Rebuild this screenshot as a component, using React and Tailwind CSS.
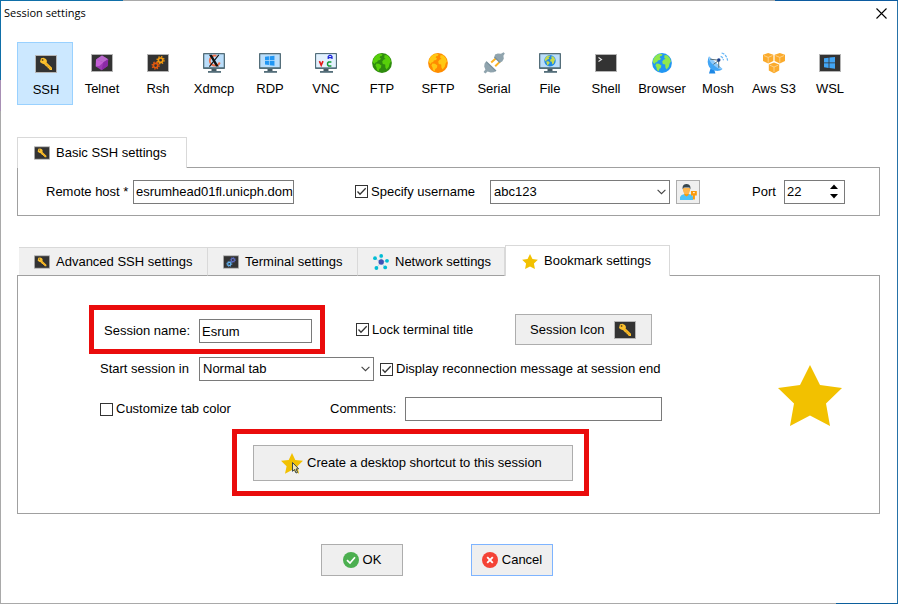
import React, { useState } from "react";

function Terminal({ children, className = "h-[18px] w-[22px]" }) {
  return (
    <svg viewBox="0 0 22 18" className={`shrink-0 ${className}`} aria-hidden="true">
      <rect x=".5" y=".5" width="21" height="17" fill="#333333" stroke="#b5b5b5" />
      {children}
    </svg>
  );
}

function KeyIcon({ className }) {
  return (
    <Terminal className={className}>
      <path
        d="M6 3.200 8.500 2.800 11 4 12 6 11.600 7.600 17 12.800V15H14.800L13.600 13.200H12.800L12.200 11.600H11.200L9.200 9.200 7 8.600 5 7Z"
        fill="#fbc02d"
      />
      <path d="M10.600 8.200 15.800 13.800" stroke="#ee9f12" strokeWidth=".9" />
      <circle cx="7.600" cy="5" r=".9" fill="#6b5520" />
    </Terminal>
  );
}

function GearsIcon({ a, b, className }) {
  return (
    <Terminal className={className}>
      <circle cx="13.600" cy="6.200" r="2.200" fill="none" stroke={a} strokeWidth="1.700" />
      <circle cx="13.600" cy="6.200" r="3.500" fill="none" stroke={a} strokeWidth="1.300" strokeDasharray="1.400 1.350" />
      <circle cx="8.600" cy="11.600" r="2.200" fill="none" stroke={b} strokeWidth="1.700" />
      <circle cx="8.600" cy="11.600" r="3.500" fill="none" stroke={b} strokeWidth="1.300" strokeDasharray="1.400 1.350" />
    </Terminal>
  );
}

function Monitor({ children }) {
  return (
    <svg viewBox="0 0 22 20" className="h-5 w-[22px]" aria-hidden="true">
      <path d="M8.500 15h5v3.200h-5z" fill="#455a64" />
      <path d="M5 18h13v1.800H5z" fill="#546e7a" />
      <rect width="22" height="16" rx=".8" fill="#546e7a" />
      <rect x="1.300" y="1.300" width="19.400" height="12.900" fill="#bbdefb" />
      {children}
    </svg>
  );
}

function Continents({ fill }) {
  return (
    <g fill={fill}>
      <path d="M2.200 4.600 4.800 1.800 8 .8 10.600 1.200 9.600 3 8.200 3.200 7.600 4.600 9 5.400 8 7 5.800 7.400 5.200 9 3.400 9.400 2.800 11 .9 9.600Q.9 6.600 2.200 4.600Z" />
      <path d="M4.400 10.600 7 10.800 9.400 12.600 8.800 15 7.200 16 6.800 18.400 5 17 4.400 14.200 3.400 12.600Z" />
      <path d="M12.600 2 15.600 2.600 18 5.400 18.900 8.400 17.600 10.400 16.800 13.800 14.600 16.400 13.400 14.600 13.200 11.600 10.800 11 10.200 8.600 11.800 6.600 13.600 6 12.200 4.800Z" />
    </g>
  );
}

function Globe({ sea, land }) {
  return (
    <svg viewBox="0 0 20 20" className="size-5" aria-hidden="true">
      <circle cx="10" cy="10" r="9.900" fill={sea} />
      <Continents fill={land} />
    </svg>
  );
}

function WinLogo({ fill }) {
  return (
    <path
      fill={fill}
      d="M0 1.300 4.600.7V5.400H0ZM5.400.6 11 0V5.400H5.400ZM0 6.200H4.600V10.900L0 10.300ZM5.400 6.200H11V11.800L5.400 11Z"
    />
  );
}

function TelnetIcon() {
  return (
    <Terminal>
      <path d="M11 1.600 17.200 5.200 16.600 12 10.600 16.200 4.800 12.600 5 5.600Z" fill="#9c3bb4" />
      <path d="M11 1.600 17.200 5.200 12.400 8.200 5 5.600Z" fill="#b868cc" />
      <path d="M12.400 8.200 17.200 5.200 16.600 12 10.600 16.200Z" fill="#8a2aa6" />
      <path d="M5 5.600 12.400 8.200 8.400 12 4.800 12.600Z" fill="#c45fd6" />
    </Terminal>
  );
}

function XdmcpIcon() {
  return (
    <Monitor>
      <path d="M13.500 2.800A5.200 5 0 1 0 16.800 9.500" fill="none" stroke="#f0704a" strokeWidth="1.900" />
      <path d="M6 1.800H8.800L15.800 13.600H13Z" fill="#111" />
      <path d="M15.800 1.800 6.400 13.600" stroke="#111" strokeWidth="1.100" />
    </Monitor>
  );
}

function VncIcon() {
  return (
    <Monitor>
      <rect x="1.300" y="1.300" width="19.400" height="12.900" fill="#e3f1fd" />
      <path d="M4.400 8.200 6.200 12.200 8 8.200" fill="none" stroke="#e31b1b" strokeWidth="1.600" />
      <path d="M13.200 6V3.600L14.400 2.400H15.800L17 3.600V6M13.400 4.600H16.800" fill="none" stroke="#1a23d8" strokeWidth="1.200" />
      <path d="M16.400 9H13.600L12.600 10V12L13.600 13H16.400" fill="none" stroke="#109a30" strokeWidth="1.500" />
    </Monitor>
  );
}

function SerialIcon() {
  return (
    <svg viewBox="0 0 22 22" className="size-[22px]" aria-hidden="true">
      <path d="M8.200 10.600 13.600 5.800M12.200 14.200 17 9.600" stroke="#fbb324" strokeWidth="2" />
      <path d="M11.400 5 12 2.600 14.800 1.400 18 1.800 20.600.2 21.800 1.400 20.400 3.800 20.800 6.800 19.200 9.600 17 10.600Z" fill="#90a4ae" />
      <path d="M3.200 9.600 13 19 10.800 20.200 7.600 20.600 4.600 19.600 2.400 21.600.6 20 2.400 17.600 1.200 14.600 1.600 11.400Z" fill="#90a4ae" />
      <path d="M3.200 9.600 13 19M11.400 5 17 10.600" fill="none" stroke="#78909c" strokeWidth="1.300" />
    </svg>
  );
}

function MoshIcon() {
  return (
    <svg viewBox="0 0 22 22" className="size-[22px]" aria-hidden="true">
      <path d="M3.600 16.200 2 21.600H8.400L7.200 17.400Z" fill="#1e88e5" />
      <path d="M2 4.400C-1 10 1.400 17.600 8.400 18.800 11.600 19.200 14 18.400 15.400 17Z" fill="#42a5f5" />
      <path d="M2 4.400 15.400 17C14 18.400 9 15.800 6 12.600 2.600 9.200 1 6 2 4.400Z" fill="#90caf9" />
      <path d="M3.200 7.200 11.600 8.200 11.800 15.800M11.800 8.400 6.400 12.400" fill="none" stroke="#546e7a" strokeWidth="1" />
      <circle cx="11.800" cy="8" r="1.700" fill="#1a3e8c" />
      <path d="M13.600 4.400Q16 5 16.400 8.200M14.600 1Q19.400 2.200 20.600 8.600" fill="none" stroke="#64b5f6" strokeWidth="1.200" strokeDasharray="3 1" />
    </svg>
  );
}

function Cube() {
  return (
    <>
      <path d="M5.200 0 10.400 1.800V8L5.200 10.600 0 8V1.800Z" fill="#fbab2c" />
      <path d="M1 2.600 5.200 4.400 9.400 2.600M5.200 4.400V9.600" fill="none" stroke="#fde0b0" strokeWidth=".7" />
    </>
  );
}

function AwsIcon() {
  return (
    <svg viewBox="0 0 22 21" className="h-[21px] w-[22px]" aria-hidden="true">
      <Cube />
      <g transform="translate(11.600 0)">
        <Cube />
      </g>
      <g transform="translate(5.800 9.600)">
        <Cube />
      </g>
    </svg>
  );
}

function Star({ className }) {
  return (
    <svg viewBox="0 0 64 61" className={`shrink-0 ${className}`} aria-hidden="true">
      <path d="M32 0 42 20 64 23 48 38.500 52 61 32 50.500 12 61 16 38.500 0 23 22 20Z" fill="#f2c100" />
    </svg>
  );
}

function NetworkIcon() {
  return (
    <svg viewBox="0 0 16 16" className="size-4 shrink-0" aria-hidden="true">
      <path d="M8 8 8.200 2M8 8 2 4.500M8 8 14 6.800M8 8 3.500 14M8 8 12 13.500" stroke="#9adbe8" strokeWidth=".8" />
      <circle cx="8.200" cy="8" r="2.700" fill="#3f51b5" />
      <g fill="#00bcd4">
        <circle cx="8.200" cy="1.900" r="1.900" />
        <circle cx="2" cy="4.200" r="1.900" />
        <circle cx="14" cy="6.800" r="1.900" />
        <circle cx="3.400" cy="14" r="1.900" />
        <circle cx="12.200" cy="13.400" r="1.900" />
      </g>
    </svg>
  );
}

function UserKeyIcon() {
  return (
    <svg viewBox="0 0 17 16" className="h-4 w-[17px] shrink-0" aria-hidden="true">
      <path d="M0 16V13Q1 10.400 4.500 10H8.500Q12.600 10.400 13 13V16Z" fill="#4fc3f7" />
      <path d="M4.400 9H8.600V11L6.500 12.600 4.400 11Z" fill="#ff9800" />
      <path d="M3 4H10V6.500Q9.500 10.200 6.500 10.300 3.500 10.200 3 6.500Z" fill="#ffb74d" />
      <path d="M2.600 5.400V3Q3.200.2 6.500.1 9.800.2 10.400 3V5.400L9.400 3.400H5L3.600 3.800Z" fill="#37474f" />
      <path d="M11 7H16.800V11.400H14.900V15.600H12.900V11.400H11Z" fill="#fb9a0b" />
      <path d="M13 8.700H14.800" stroke="#fff" strokeWidth="1" />
    </svg>
  );
}

const SESSIONS = [
  ["SSH", <KeyIcon />],
  ["Telnet", <TelnetIcon />],
  ["Rsh", <GearsIcon a="#f59a0c" b="#e2590f" />],
  ["Xdmcp", <XdmcpIcon />],
  [
    "RDP",
    <Monitor>
      <g transform="translate(6 2.700) scale(.86)">
        <WinLogo fill="#2196f3" />
      </g>
    </Monitor>,
  ],
  ["VNC", <VncIcon />],
  ["FTP", <Globe sea="#2e8b0e" land="#57cf0a" />],
  ["SFTP", <Globe sea="#ff8c00" land="#ffc814" />],
  ["Serial", <SerialIcon />],
  [
    "File",
    <Monitor>
      <g transform="translate(5.200 2) scale(.58)">
        <circle cx="10" cy="10" r="9.900" fill="#1e88e5" />
        <Continents fill="#c5d94c" />
      </g>
    </Monitor>,
  ],
  [
    "Shell",
    <Terminal>
      <path d="M3.500 3.500 6.500 5.500 3.500 7.500" fill="none" stroke="#e8e8e8" strokeWidth="1.100" />
    </Terminal>,
  ],
  ["Browser", <Globe sea="#2196f3" land="#8fe84c" />],
  ["Mosh", <MoshIcon />],
  ["Aws S3", <AwsIcon />],
  [
    "WSL",
    <Terminal>
      <g transform="translate(5 3)">
        <WinLogo fill="#42a5f5" />
      </g>
    </Terminal>,
  ],
];

function CheckBox({ id, children, defaultChecked }) {
  return (
    <div className="flex items-center gap-[3px]">
      <span className="grid size-[13px] shrink-0">
        <input
          id={id}
          type="checkbox"
          defaultChecked={defaultChecked}
          className="peer col-start-1 row-start-1 size-[13px] appearance-none border border-[#333333] bg-white"
        />
        <svg
          viewBox="0 0 13 13"
          className="pointer-events-none invisible col-start-1 row-start-1 size-[13px] peer-checked:visible"
          aria-hidden="true"
        >
          <path d="M2.500 6.500 5 9.200 10.700 3.300" fill="none" stroke="#333" strokeWidth="1.300" />
        </svg>
      </span>
      <label htmlFor={id}>{children}</label>
    </div>
  );
}

function Combo({ id, label, className, children }) {
  return (
    <span className={`grid shrink-0 ${className}`}>
      <select
        id={id}
        aria-label={label}
        className="col-start-1 row-start-1 h-6 w-full appearance-none border border-[#7a7a7a] bg-white pr-5 pl-[3px]"
      >
        {children}
      </select>
      <svg
        viewBox="0 0 9 6"
        className="pointer-events-none col-start-1 row-start-1 mr-1 h-[6px] w-[9px] self-center justify-self-end"
        aria-hidden="true"
      >
        <path d="M.6.8 4.500 4.700 8.400.8" fill="none" stroke="#444" strokeWidth="1.100" />
      </svg>
    </span>
  );
}

const FIELD = "h-6 border border-[#7a7a7a] bg-white pl-[2px]";
const BUTTON = "flex items-center border border-[#adadad] bg-[#efefef]";
const TAB =
  "flex h-[29px] items-center gap-[6px] border-t border-r border-b border-[#d9d9d9] border-b-[#a0a0a0] bg-[#f0f0f0] pl-[15px]";

export default function App() {
  const [port, setPort] = useState(22);
  return (
    <div className="flex min-h-screen flex-col font-['Liberation_Sans',Arial,sans-serif] text-[13px] leading-4 text-black">
      <div className="h-px bg-[linear-gradient(to_right,#0f6fa8_123px,#a9a9a9_123px,#a9a9a9_775px,#0c5ba0_775px)]" />
      <div className="flex flex-1">
        <div className="w-px bg-[linear-gradient(to_bottom,#0f6fa8_79px,#a78fb4_79px,#a78fb4_110px,#a9a9a9_110px)]" />
        <main className="min-w-0 flex-1 bg-white">
          <header className="flex h-6 items-center justify-between pr-[10px] pl-[3px]">
            <h1 className="font-['Open_Sans','Noto_Sans',sans-serif] text-[11px]">Session settings</h1>
            <button type="button" aria-label="Close">
              <svg viewBox="0 0 11 11" className="size-[11px]" aria-hidden="true">
                <path d="M.5.5 10.500 10.500M10.500.5.5 10.500" stroke="#000" strokeWidth="1.100" />
              </svg>
            </button>
          </header>

          <nav className="mt-[17px] flex pl-4" aria-label="Session type">
            {SESSIONS.map(([name, icon], i) => (
              <button
                key={name}
                type="button"
                className={
                  "flex h-[63px] w-14 shrink-0 flex-col items-center pt-[9px] pl-[2px] whitespace-nowrap " +
                  (i === 0 ? "border border-[#99d1ff] bg-[#cce8ff]" : "")
                }
              >
                <span className="flex h-6 items-center">{icon}</span>
                <span className="mt-[6px]">{name}</span>
              </button>
            ))}
          </nav>

          <section className="mt-8 mr-[17px] ml-4">
            <div className="relative -mb-px flex h-[31px] w-[170px] items-center gap-[6px] border-x border-t border-[#d9d9d9] bg-white pl-4">
              <KeyIcon className="h-[14px] w-4" />
              <h2>Basic SSH settings</h2>
            </div>
            <div className="flex h-[49px] items-center border border-[#a0a0a0] pl-7">
              <label htmlFor="host" className="w-[87px] shrink-0">
                Remote host *
              </label>
              <input id="host" defaultValue="esrumhead01fl.unicph.dom" className={FIELD + " w-[161px]"} />
              <div className="ml-[61px] w-[135px]">
                <CheckBox id="user-on" defaultChecked>
                  Specify username
                </CheckBox>
              </div>
              <Combo id="user" label="Username" className="w-[180px]">
                <option>abc123</option>
              </Combo>
              <button
                type="button"
                aria-label="Manage users"
                className={BUTTON + " ml-[6px] size-6 shrink-0 justify-center"}
              >
                <UserKeyIcon />
              </button>
              <label htmlFor="port" className="ml-[52px] w-8 shrink-0">
                Port
              </label>
              <div className="flex h-6 w-[61px] shrink-0 items-center border border-[#7a7a7a] pr-[6px] pl-[2px]">
                <input
                  id="port"
                  inputMode="numeric"
                  value={port}
                  onChange={(e) => setPort(Number(e.target.value) || 0)}
                  className="w-full min-w-0 flex-1"
                />
                <div className="flex flex-col gap-[5px]">
                  <button type="button" aria-label="Increase port" onClick={() => setPort(port + 1)}>
                    <svg viewBox="0 0 8 5" className="block h-[5px] w-2" aria-hidden="true">
                      <path d="M0 5 4 .5 8 5Z" />
                    </svg>
                  </button>
                  <button type="button" aria-label="Decrease port" onClick={() => setPort(port - 1)}>
                    <svg viewBox="0 0 8 5" className="block h-[5px] w-2" aria-hidden="true">
                      <path d="M0 0 4 4.500 8 0Z" />
                    </svg>
                  </button>
                </div>
              </div>
            </div>
          </section>

          <section className="mt-[29px] mr-[17px] ml-4">
            <div className="relative -mb-px flex items-end pl-[2px]" role="tablist">
              <button type="button" role="tab" className={TAB + " w-[189px]"}>
                <KeyIcon className="h-[14px] w-4" />
                Advanced SSH settings
              </button>
              <button type="button" role="tab" className={TAB + " w-[150px]"}>
                <GearsIcon a="#5c6bc0" b="#64b5f6" className="h-[14px] w-4" />
                Terminal settings
              </button>
              <button type="button" role="tab" className={TAB + " w-[147px]"}>
                <NetworkIcon />
                Network settings
              </button>
              <button
                type="button"
                role="tab"
                aria-selected="true"
                className="flex h-[31px] w-[165px] items-center gap-[6px] border-x border-t border-[#d9d9d9] bg-white pl-4"
              >
                <Star className="h-[15px] w-4" />
                Bookmark settings
              </button>
            </div>

            <div className="flex items-center justify-between border border-[#a0a0a0] pt-[29px] pr-[37px] pb-[17px] pl-[71px]">
              <form className="flex flex-col items-start">
                <div className="flex items-center">
                  <div className="flex w-[236px] items-center border-5 border-[#ea0c0c] pt-[9px] pr-2 pb-[6px] pl-[10px]">
                    <label htmlFor="session" className="w-[95px] shrink-0">
                      Session name:
                    </label>
                    <input id="session" defaultValue="Esrum" className={FIELD + " w-[113px] min-w-0"} />
                  </div>
                  <div className="ml-[31px] w-[159px]">
                    <CheckBox id="lock" defaultChecked>
                      Lock terminal title
                    </CheckBox>
                  </div>
                  <button type="button" className={BUTTON + " h-[31px] w-[137px] gap-[10px] pl-[14px]"}>
                    Session Icon
                    <KeyIcon />
                  </button>
                </div>

                <div className="mt-[3px] ml-[11px] flex items-center">
                  <label htmlFor="start" className="w-[99px]">
                    Start session in
                  </label>
                  <Combo id="start" className="w-[175px]">
                    <option>Normal tab</option>
                  </Combo>
                  <div className="ml-[6px]">
                    <CheckBox id="reconnect" defaultChecked>
                      Display reconnection message at session end
                    </CheckBox>
                  </div>
                </div>

                <div className="mt-4 ml-[11px] flex items-center">
                  <div className="w-[230px]">
                    <CheckBox id="color">Customize tab color</CheckBox>
                  </div>
                  <label htmlFor="comments" className="w-[75px]">
                    Comments:
                  </label>
                  <input id="comments" className={FIELD + " w-[257px]"} />
                </div>

                <div className="mt-2 ml-[143px] border-5 border-[#ea0c0c] pt-[11px] pr-[11px] pb-[10px] pl-4">
                  <button type="button" className={BUTTON + " h-9 w-80 gap-1 pl-[27px]"}>
                    <svg viewBox="0 0 22 21" className="h-[21px] w-[22px]" aria-hidden="true">
                      <path d="M11 0 14.300 7 22 7.800 16.400 13.200 18 20.800 11 17 4 20.800 5.600 13.200 0 7.800 7.700 7Z" fill="#f2c100" />
                      <path d="M11.500 9.500V18.300L13.500 16.500 15 20 16.600 19.300 15 16 17.600 15.800Z" fill="#f6e7b0" stroke="#37474f" />
                    </svg>
                    Create a desktop shortcut to this session
                  </button>
                </div>
              </form>
              <Star className="mb-[10px] h-[61px] w-16" />
            </div>
          </section>

          <footer className="mt-[30px] mb-[27px] flex justify-center gap-[68px] pr-6">
            <button type="button" className={BUTTON + " h-8 w-[82px] justify-center gap-1"}>
              <svg viewBox="0 0 16 16" className="size-4" aria-hidden="true">
                <circle cx="8" cy="8" r="8" fill="#4caf50" />
                <path d="M4 8.200 7 11 12 5.200" fill="none" stroke="#fff" strokeWidth="1.700" />
              </svg>
              OK
            </button>
            <button
              type="button"
              className="flex h-8 w-[82px] items-center justify-center gap-1 border border-[#7eb4ff] bg-[#efefef]"
            >
              <svg viewBox="0 0 16 16" className="size-4" aria-hidden="true">
                <circle cx="8" cy="8" r="8" fill="#f44336" />
                <path d="M5.200 5.200 10.800 10.800M10.800 5.200 5.200 10.800" stroke="#fff" strokeWidth="1.900" />
              </svg>
              Cancel
            </button>
          </footer>
        </main>
        <div className="w-px bg-[#2672a8]" />
      </div>
      <div className="h-px bg-[linear-gradient(to_right,#a9a9a9_836px,#0c5f9c_836px)]" />
    </div>
  );
}
